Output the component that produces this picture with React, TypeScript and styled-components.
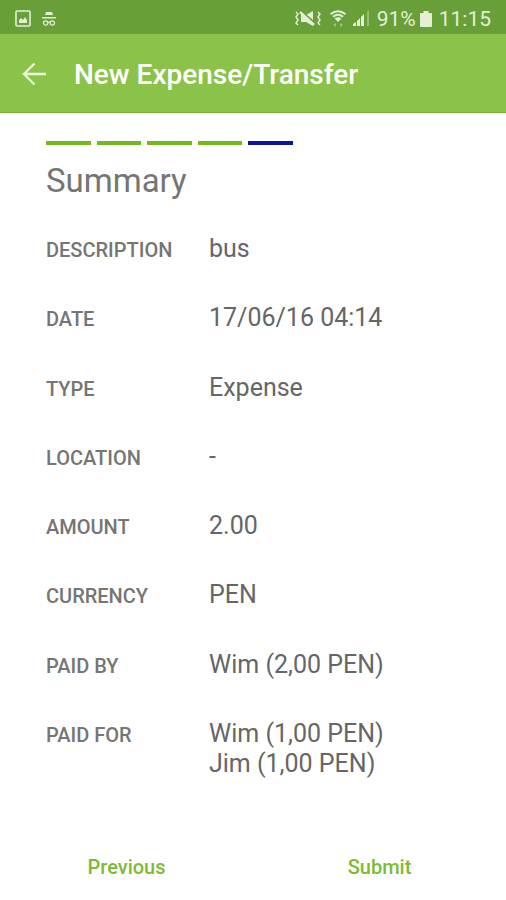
import React from "react";
import styled, { createGlobalStyle } from "styled-components";

const GlobalStyle = createGlobalStyle`
  * { box-sizing: border-box; }
  body {
    margin: 0;
    background: #ffffff;
    color: #666666;
    font-family: Roboto, "Liberation Sans", sans-serif;
  }
`;

const Screen = styled.div`
  display: flex;
  flex-direction: column;
  min-height: 100vh;
`;

const StatusBar = styled.div`
  display: flex;
  align-items: center;
  justify-content: space-between;
  height: 34px;
  padding: 3px 15px 0;
  background: #689f38;
  color: #e4efd6;
  font-size: 21px;
`;

const StatusGroup = styled.div<{ $gap: number }>`
  display: flex;
  align-items: center;
  gap: ${({ $gap }) => $gap}px;
`;

const AppBar = styled.header`
  display: flex;
  align-items: center;
  gap: 26px;
  height: 79px;
  padding: 2px 22px 0;
  background: #8bc34a;
  border-bottom: 1px solid #79b531;
  color: #ffffff;
`;

const BackButton = styled.button`
  display: flex;
  padding: 0;
  border: 0;
  background: none;
  color: #eaf5dc;
  cursor: pointer;
`;

const Title = styled.h1`
  margin: 0;
  padding-top: 2px;
  font-size: 28px;
  line-height: 32px;
  font-weight: 500;
`;

const Content = styled.main`
  display: flex;
  flex: 1;
  flex-direction: column;
  padding: 28px 46px 0;
`;

const Steps = styled.div`
  display: flex;
  gap: 6px;
  max-width: 247px;
`;

const Step = styled.span<{ $current: boolean }>`
  flex: 1;
  height: 4px;
  background: ${({ $current }) => ($current ? "#0a12a0" : "#76b81e")};
`;

const Heading = styled.h2`
  margin: 16px 0 33px;
  color: #757575;
  font-size: 33px;
  line-height: 40px;
  font-weight: 400;
`;

const Details = styled.dl`
  display: flex;
  flex: 1;
  flex-direction: column;
  justify-content: space-between;
  gap: 16px;
  margin: 0;
`;

const Detail = styled.div`
  display: grid;
  grid-template-columns: 147px 1fr;
  column-gap: 16px;
`;

const Label = styled.dt`
  padding-top: 2px;
  color: #757575;
  font-size: 20px;
  line-height: 28px;
  font-weight: 500;
  text-transform: uppercase;
`;

const Value = styled.dd`
  margin: 0;
  font-size: 25px;
  line-height: 30px;
  font-weight: 400;
`;

const Actions = styled.footer`
  display: grid;
  grid-template-columns: 1fr 1fr;
  margin-top: 55px;
`;

const Action = styled.button`
  height: 66px;
  padding: 0;
  border: 0;
  background: none;
  color: #7dbb36;
  font: 500 20px/24px Roboto, "Liberation Sans", sans-serif;
  cursor: pointer;
`;

const ImageIcon = () => (
  <svg width="16" height="18" viewBox="0 0 16 18" aria-hidden="true">
    <rect x="1" y="1" width="14" height="15" rx="1" fill="none" stroke="currentColor" strokeWidth="1.6" />
    <path d="M4 13v-3l2-2 2 2 2-3 2 3v3z" fill="currentColor" />
  </svg>
);

const IncognitoIcon = () => (
  <svg width="14" height="16" viewBox="0 0 14 16" aria-hidden="true">
    <path d="M4 1h6l1 3H3zM0 6h14v1.5H0z" fill="currentColor" />
    <g fill="none" stroke="currentColor" strokeWidth="1.2">
      <circle cx="3.7" cy="12" r="2.2" />
      <circle cx="10.3" cy="12" r="2.2" />
      <path d="M6 11.5q1-.8 2 0" />
    </g>
  </svg>
);

const VibrateIcon = () => (
  <svg width="26" height="18" viewBox="0 0 26 18" aria-hidden="true">
    <path d="M6 5h5l7-4v15l-7-4H6z" fill="currentColor" />
    <path d="M6 1l15 13" stroke="#689f38" strokeWidth="2" />
    <path d="M5 2l14 13" stroke="currentColor" strokeWidth="2.4" />
    <path d="M1 2l2 2-2 3 2 3-2 3 2 2M23 2l2 2-2 3 2 3-2 3 2 2" fill="none" stroke="currentColor" strokeWidth="1.4" />
  </svg>
);

const WifiIcon = () => (
  <svg width="16" height="18" viewBox="0 0 16 18" aria-hidden="true">
    <g fill="none" stroke="currentColor" strokeWidth="2">
      <path d="M.5 4.2q7.500-6 15 0" />
      <path d="M3 6.800q5-4 10 0" />
    </g>
    <path d="M4.500 8.500q3.500-2.500 7 0L8 12z" fill="currentColor" />
    <path d="M5.500 13v4l-2-2zM10.500 17v-4l2 2z" fill="currentColor" opacity=".65" />
  </svg>
);

const SignalIcon = () => (
  <svg width="17" height="17" viewBox="0 0 17 17" aria-hidden="true">
    <path d="M0 16v-2l3-2v4zM4 16v-5l3-3v8zM8 16V7l3-3v12z" fill="currentColor" />
    <path d="M14 16V2l2-2v16z" fill="currentColor" opacity=".4" />
  </svg>
);

const BatteryIcon = () => (
  <svg width="12" height="18" viewBox="0 0 12 18" aria-hidden="true">
    <path d="M3.500 1h5v2H11a1 1 0 0 1 1 1v12a1 1 0 0 1-1 1H1a1 1 0 0 1-1-1V4a1 1 0 0 1 1-1h2.500z" fill="currentColor" />
  </svg>
);

const BackIcon = () => (
  <svg width="26" height="24" viewBox="0 0 26 24" fill="none" stroke="currentColor" strokeWidth="2.400" aria-hidden="true">
    <path d="M24 12H3M12.500 1.500L2 12l10.500 10.500" />
  </svg>
);

const STEP_COUNT = 5;
const CURRENT_STEP = 4;

const details: { label: string; values: string[] }[] = [
  { label: "Description", values: ["bus"] },
  { label: "Date", values: ["17/06/16 04:14"] },
  { label: "Type", values: ["Expense"] },
  { label: "Location", values: ["-"] },
  { label: "Amount", values: ["2.00"] },
  { label: "Currency", values: ["PEN"] },
  { label: "Paid by", values: ["Wim (2,00 PEN)"] },
  { label: "Paid for", values: ["Wim (1,00 PEN)", "Jim (1,00 PEN)"] },
];

export default function App() {
  return (
    <>
      <GlobalStyle />
      <Screen>
        <StatusBar>
          <StatusGroup $gap={11}>
            <ImageIcon />
            <IncognitoIcon />
          </StatusGroup>
          <StatusGroup $gap={7}>
            <StatusGroup $gap={9}>
              <VibrateIcon />
              <WifiIcon />
            </StatusGroup>
            <SignalIcon />
            <StatusGroup $gap={4}>
              <span>91%</span>
              <BatteryIcon />
            </StatusGroup>
            <span>11:15</span>
          </StatusGroup>
        </StatusBar>
        <AppBar>
          <BackButton type="button" aria-label="Back">
            <BackIcon />
          </BackButton>
          <Title>New Expense/Transfer</Title>
        </AppBar>
        <Content>
          <Steps role="img" aria-label="Step 5 of 5">
            {Array.from({ length: STEP_COUNT }, (_, i) => (
              <Step key={i} $current={i === CURRENT_STEP} />
            ))}
          </Steps>
          <Heading>Summary</Heading>
          <Details>
            {details.map(({ label, values }) => (
              <Detail key={label}>
                <Label>{label}</Label>
                <Value>
                  {values.map((value) => (
                    <div key={value}>{value}</div>
                  ))}
                </Value>
              </Detail>
            ))}
          </Details>
        </Content>
        <Actions>
          <Action type="button">Previous</Action>
          <Action type="button">Submit</Action>
        </Actions>
      </Screen>
    </>
  );
}
